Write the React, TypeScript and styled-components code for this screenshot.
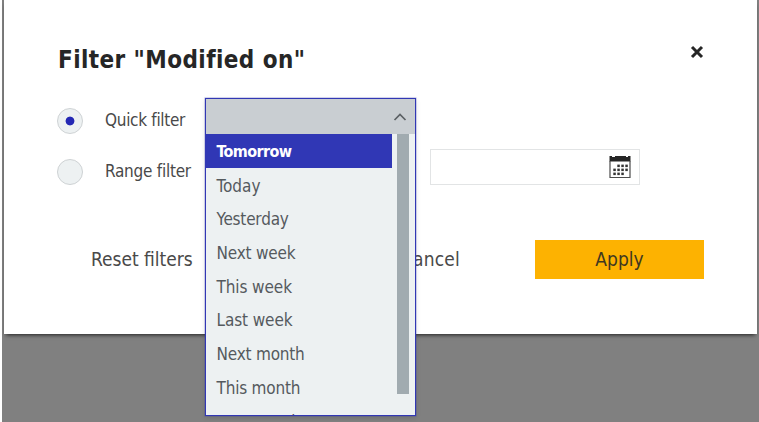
import React from "react";
import styled, { createGlobalStyle } from "styled-components";

const GlobalStyle = createGlobalStyle`
  * { box-sizing: border-box; }
  body {
    margin: 0;
    overflow: hidden;
    background: #fff;
    font-family: "DejaVu Sans Condensed", "DejaVu Sans", "Noto Sans", sans-serif;
    font-stretch: condensed;
  }
  button { font: inherit; border: 0; padding: 0; background: none; }
`;

const Backdrop = styled.div`
  width: 757px;
  height: 422px;
  margin-left: 2px;
  padding: 0 2px;
  background: #808080;
`;

const Dialog = styled.section`
  height: 334px;
  padding: 40px 53px 0 54px;
  background: #fff;
  box-shadow: 0 3px 4px -2px rgba(0, 0, 0, 0.75);
`;

const Header = styled.header`
  display: flex;
  justify-content: space-between;
  height: 58px;
`;

const Title = styled.h1`
  margin: 0;
  font-size: 24px;
  line-height: 41px;
  letter-spacing: 0.42px;
  font-weight: 700;
  color: #262626;
`;

const CloseButton = styled.button`
  display: flex;
  width: 15px;
  height: 24px;
  align-items: center;
  justify-content: center;
`;

const FilterRow = styled.div<{ $height: number }>`
  display: grid;
  grid-template-columns: 47px 100px 1fr;
  height: ${(p) => p.$height}px;
`;

const Radio = styled.span<{ $checked?: boolean }>`
  width: 26px;
  height: 26px;
  margin: 10px 0 0 -1px;
  border: 1.5px solid #ced2d4;
  border-radius: 50%;
  background: ${(p) =>
    p.$checked ? "radial-gradient(circle, #2428b4 4px, #edf1f2 4.8px)" : "#edf1f2"};
`;

const Text = styled.span<{ $size: number; $spacing?: number }>`
  font-size: ${(p) => p.$size}px;
  letter-spacing: ${(p) => p.$spacing ?? 0}px;
  white-space: nowrap;
`;

const RowLabel = styled(Text)`
  line-height: 44px;
  color: #494949;
`;

const Select = styled.div`
  position: relative;
  width: 211px;
`;

const Dropdown = styled.div`
  position: absolute;
  z-index: 2;
  top: 0;
  left: 0;
  width: 211px;
  height: 318px;
  border: 1px solid #3137b4;
  background: #edf1f2;
  box-shadow: 0 0 0 0.5px rgba(49, 55, 180, 0.4), 0 2px 5px rgba(0, 0, 0, 0.12);
`;

const SelectHead = styled.div`
  display: flex;
  align-items: center;
  justify-content: flex-end;
  height: 35px;
  padding-right: 8px;
  background: #c9ced2;
`;

const OptionPane = styled.div`
  display: flex;
  height: 281px;
  overflow: hidden;
`;

const Options = styled.ul`
  flex: none;
  width: 186px;
  margin: 0;
  padding: 0;
  list-style: none;
`;

const Option = styled.li<{ $selected?: boolean }>`
  height: 33.7px;
  padding-left: 10.5px;
  line-height: 36px;
  color: ${(p) => (p.$selected ? "#fff" : "#555a5e")};
  background: ${(p) => (p.$selected ? "#3037b5" : "transparent")};
  font-weight: ${(p) => (p.$selected ? 700 : 400)};
`;

const ScrollThumb = styled.div`
  width: 12px;
  height: 260px;
  margin-left: 5px;
  background: #a1abb0;
`;

const DateFields = styled.div`
  display: flex;
  gap: 15px;
`;

const DateField = styled.div`
  display: flex;
  align-items: center;
  justify-content: flex-end;
  width: 210px;
  height: 36px;
  padding-right: 8px;
  border: 1px solid #e2e4e5;
`;

const Footer = styled.footer`
  display: flex;
  margin-top: 38px;
  height: 40px;
  align-items: center;
  color: #494949;
`;

const TextButton = styled.button<{ $left: number; $width: number }>`
  width: ${(p) => p.$width}px;
  margin-left: ${(p) => p.$left}px;
  text-align: left;
  color: #494949;
`;

const ApplyButton = styled.button`
  width: 169px;
  height: 39px;
  margin-left: auto;
  background: #fdb201;
  color: #403820;
`;

const Cross = () => (
  <svg width="14" height="14" viewBox="0 0 14 14">
    <path d="M2 2L12 12M12 2L2 12" stroke="#262626" strokeWidth="3" />
  </svg>
);

const Chevron = () => (
  <svg width="14" height="10" viewBox="0 0 14 10">
    <path d="M1.5 8L7 2.5L12.5 8" fill="none" stroke="#5b6064" strokeWidth="1.7" />
  </svg>
);

const dots = [
  [10, 10], [14, 10], [18, 10],
  [6, 14], [10, 14], [14, 14], [18, 14],
  [6, 18], [10, 18], [14, 18],
];

const Calendar = () => (
  <svg width="22" height="24" viewBox="0 0 22 24">
    <path d="M0.5 1H3V2H6V1H17V2H19V1H21.5V6.5H0.5Z" fill="#262626" />
    <path d="M1 6V22.5H21V6" fill="none" stroke="#4b4b4b" strokeWidth="1.2" />
    {dots.map(([x, y]) => (
      <rect key={`${x}-${y}`} x={x - 1.7} y={y - 0.4} width="2.5" height="2.5" fill="#333" />
    ))}
  </svg>
);

const options: [string, number][] = [
  ["Tomorrow", -0.62], ["Today", 0], ["Yesterday", -0.2], ["Next week", -0.2], ["This week", -0.1],
  ["Last week", -0.1], ["Next month", -0.2], ["This month", -0.2], ["Last month", -0.2],
];

export default function App() {
  return (
    <>
      <GlobalStyle />
      <Backdrop>
        <Dialog role="dialog">
          <Header>
            <Title>Filter "Modified on"</Title>
            <CloseButton aria-label="Close"><Cross /></CloseButton>
          </Header>
          <FilterRow $height={51}>
            <Radio $checked />
            <RowLabel $size={17} $spacing={-0.3}>Quick filter</RowLabel>
            <Select>
              <Dropdown>
                <SelectHead><Chevron /></SelectHead>
                <OptionPane>
                  <Options>
                    {options.map(([name, spacing], i) => (
                      <Option key={name} $selected={i === 0}>
                        <Text $size={i === 0 ? 16 : 17} $spacing={spacing}>{name}</Text>
                      </Option>
                    ))}
                  </Options>
                  <ScrollThumb />
                </OptionPane>
              </Dropdown>
            </Select>
          </FilterRow>
          <FilterRow $height={52}>
            <Radio />
            <RowLabel $size={17} $spacing={-0.25}>Range filter</RowLabel>
            <DateFields>
              <DateField><Calendar /></DateField>
              <DateField><Calendar /></DateField>
            </DateFields>
          </FilterRow>
          <Footer>
            <TextButton $left={33} $width={310}><Text $size={19}>Reset filters</Text></TextButton>
            <TextButton $left={0} $width={70}><Text $size={19} $spacing={0.15}>Cancel</Text></TextButton>
            <ApplyButton><Text $size={19}>Apply</Text></ApplyButton>
          </Footer>
        </Dialog>
      </Backdrop>
    </>
  );
}
